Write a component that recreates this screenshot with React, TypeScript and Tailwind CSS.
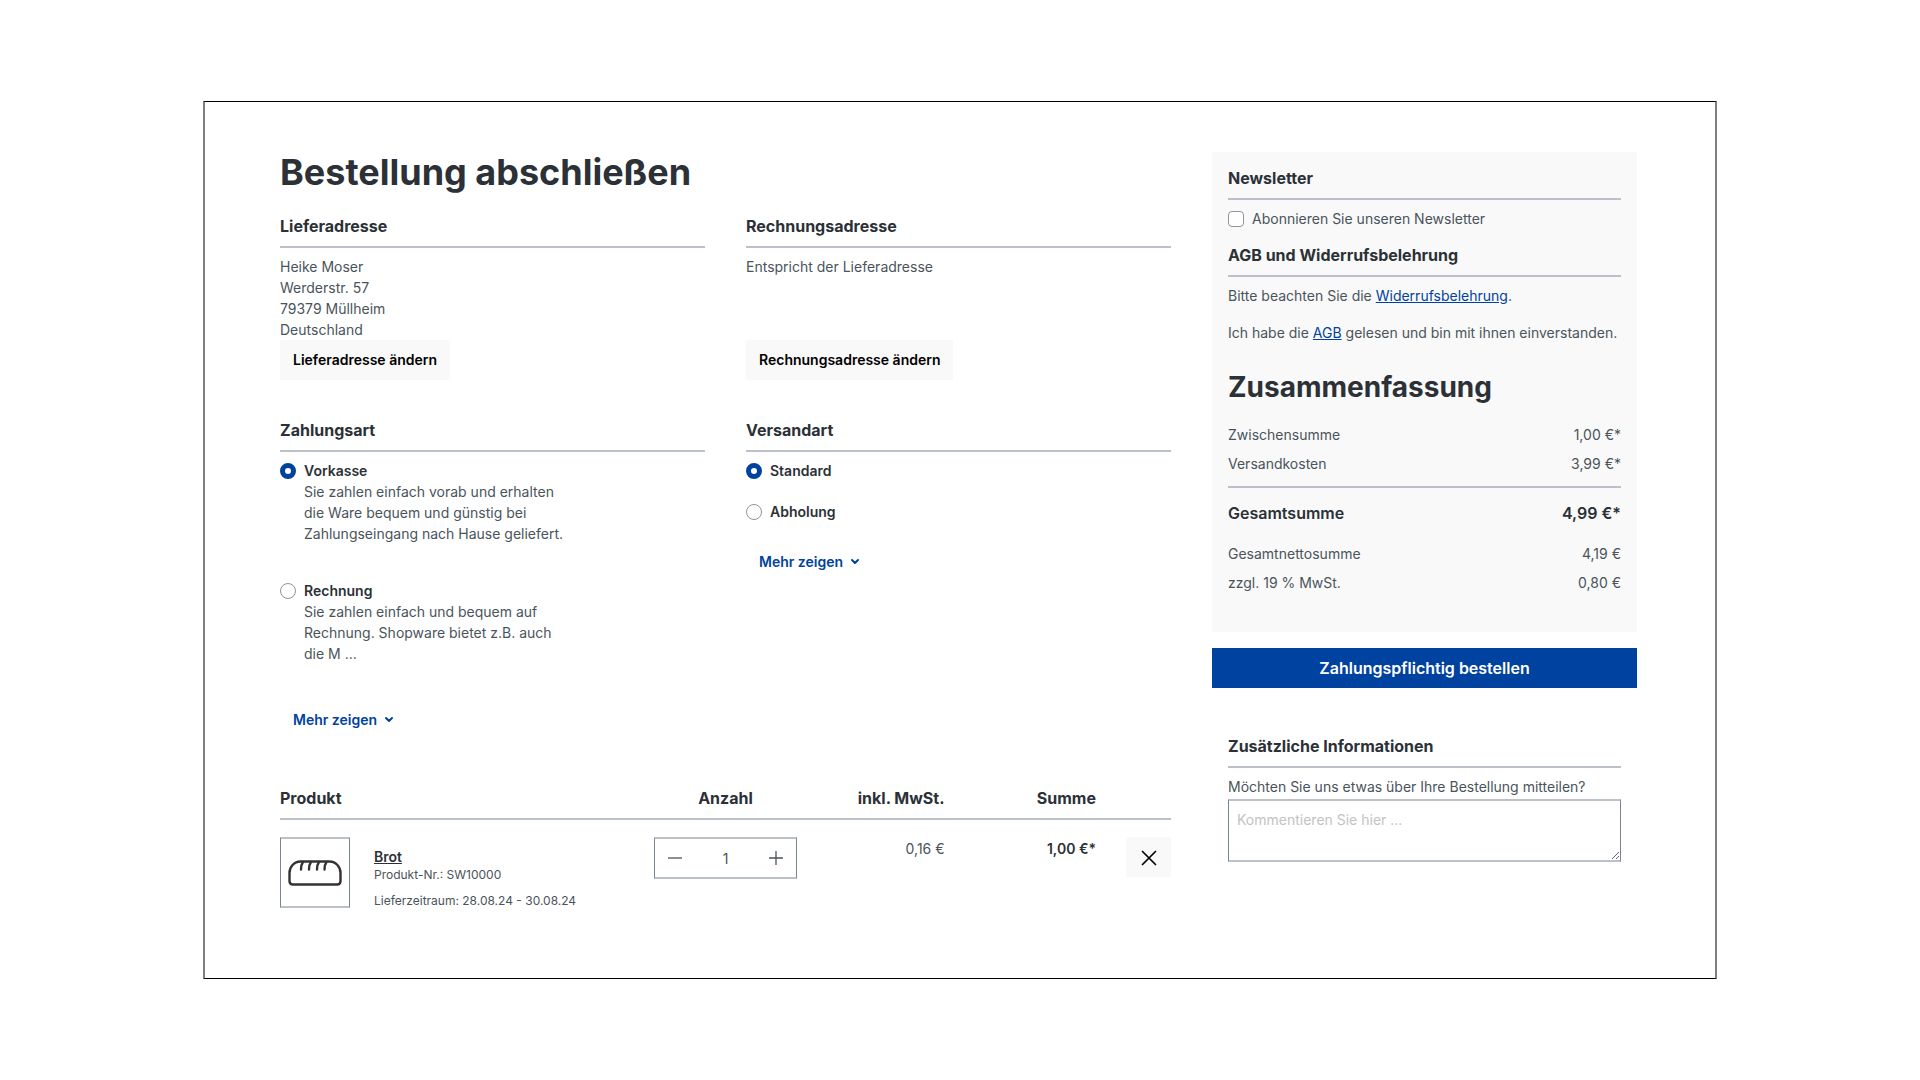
import { useState } from "react";
import type { ReactNode } from "react";

type Method = {
  id: string;
  name: string;
  description?: string;
};

const paymentMethods: Method[] = [
  {
    id: "vorkasse",
    name: "Vorkasse",
    description:
      "Sie zahlen einfach vorab und erhalten die Ware bequem und günstig bei Zahlungseingang nach Hause geliefert.",
  },
  {
    id: "rechnung",
    name: "Rechnung",
    description: "Sie zahlen einfach und bequem auf Rechnung. Shopware bietet z.B. auch die M ...",
  },
];

const shippingMethods: Method[] = [
  { id: "standard", name: "Standard" },
  { id: "abholung", name: "Abholung" },
];

function SectionTitle({ children }: { children: ReactNode }) {
  return (
    <h2 className="border-b-2 border-[#bcc1c7] pb-2 text-base leading-6 font-bold text-[#2b3136]">
      {children}
    </h2>
  );
}

function MoreButton() {
  return (
    <button type="button" className="flex h-10 items-center gap-2 px-[13px] pb-[2px] font-semibold text-[#0042a0]">
      Mehr zeigen
      <svg className="h-2 w-2" viewBox="0 0 8 8" fill="none" stroke="currentColor" strokeWidth="2" strokeLinecap="round" strokeLinejoin="round">
        <path d="M1 3 4 6 7 3" />
      </svg>
    </button>
  );
}

type MethodListProps = {
  group: string;
  methods: Method[];
  selected: string;
  onSelect: (id: string) => void;
};

function MethodList({ group, methods, selected, onSelect }: MethodListProps) {
  return (
    <>
      {methods.map((method) => (
        <label key={method.id} className="flex items-start gap-2">
          <input
            type="radio"
            name={group}
            checked={selected === method.id}
            onChange={() => onSelect(method.id)}
            className="mt-[3px] h-4 w-4 shrink-0 appearance-none rounded-full border border-[#8d959e] bg-white checked:border-[5px] checked:border-[#0042a0]"
          />
          <span>
            <strong className="block font-semibold text-[#2b3136]">{method.name}</strong>
            {method.description && <span className="block w-[264px]">{method.description}</span>}
          </span>
        </label>
      ))}
    </>
  );
}

function BreadIcon() {
  return (
    <svg className="h-[26px] w-[54px]" viewBox="0 0 54 26" fill="none" stroke="#333" strokeWidth="2.4" strokeLinecap="round" strokeLinejoin="round">
      <path d="M12.500 1.500h29c6.500 0 11 5.500 11 11.500v8c0 2-1.500 3.500-3.500 3.500H5c-2 0-3.500-1.500-3.500-3.500v-8C1.500 7 6 1.500 12.500 1.500Z" />
      <path d="M15 2c-1.500 2-2 4.500-2 7.500M23 2c-1.500 2-2 4.500-2 7.500M31 2c-1.500 2-2 4.500-2 7.500M38.500 2c-1.500 2-2 4.500-2 7.500" />
    </svg>
  );
}

function CartTable() {
  const [quantity, setQuantity] = useState(1);

  return (
    <table className="w-full table-fixed">
      <colgroup>
        <col className="w-[42%]" />
        <col className="w-[16%]" />
        <col />
        <col className="w-[17%]" />
        <col className="w-[75px]" />
      </colgroup>
      <thead>
        <tr className="border-b-2 border-[#bcc1c7] text-base leading-6 text-[#2b3136]">
          <th className="pb-2 text-left font-bold">Produkt</th>
          <th className="pb-2 text-center font-bold">Anzahl</th>
          <th className="pb-2 text-right font-bold">inkl. MwSt.</th>
          <th className="pb-2 text-right font-bold">Summe</th>
          <td />
        </tr>
      </thead>
      <tbody>
        <tr className="align-top">
          <td className="pt-[17px]">
            <div className="flex gap-6">
              <div className="flex h-[71px] w-[70px] items-center justify-center border-x border-y-2 border-x-[#798490] border-y-[#bcc1c7]">
                <BreadIcon />
              </div>
              <div className="pt-[11px] text-xs leading-[18px]">
                <a href="#brot" className="block text-sm leading-[18px] font-semibold text-[#2b3136] underline">
                  Brot
                </a>
                <p>Produkt-Nr.: SW10000</p>
                <p className="mt-2">Lieferzeitraum: 28.08.24 - 30.08.24</p>
              </div>
            </div>
          </td>
          <td className="pt-[17px]">
            <div className="flex h-[42px] border-x border-y-2 border-x-[#798490] border-y-[#bcc1c7]">
              <button
                type="button"
                aria-label="Anzahl verringern"
                className="flex w-10 items-center justify-center"
                onClick={() => setQuantity(Math.max(1, quantity - 1))}
              >
                <svg className="h-4 w-4" viewBox="0 0 16 16" stroke="#4a545b" strokeWidth="1.3">
                  <path d="M1 8h14" />
                </svg>
              </button>
              <input
                type="text"
                aria-label="Anzahl"
                value={quantity}
                onChange={(e) => setQuantity(Number(e.target.value) || 1)}
                className="w-0 flex-1 text-center"
              />
              <button
                type="button"
                aria-label="Anzahl erhöhen"
                className="flex w-10 items-center justify-center"
                onClick={() => setQuantity(quantity + 1)}
              >
                <svg className="h-4 w-4" viewBox="0 0 16 16" stroke="#4a545b" strokeWidth="1.3">
                  <path d="M1 8h14M8 1v14" />
                </svg>
              </button>
            </div>
          </td>
          <td className="pt-[18px] text-right">0,16 €</td>
          <td className="pt-[18px] text-right font-semibold text-[#2b3136]">1,00 €*</td>
          <td className="pt-[17px]">
            <button type="button" aria-label="Entfernen" className="ml-auto flex h-10 w-[45px] items-center justify-center bg-[#f9f9f9] pt-[2px]">
              <svg className="h-4 w-4" viewBox="0 0 16 16" stroke="#000" strokeWidth="1.7" strokeLinecap="round">
                <path d="m1.500 1.500 13 13m0-13-13 13" />
              </svg>
            </button>
          </td>
        </tr>
      </tbody>
    </table>
  );
}

function OrderSidebar() {
  return (
    <aside>
      <div className="bg-[#f9f9f9] px-4 pt-[14px] pb-[39px]">
        <SectionTitle>Newsletter</SectionTitle>
        <label className="mt-2 flex items-start gap-2">
          <input type="checkbox" className="mt-[3px] h-4 w-4 appearance-none rounded-sm border border-[#8d959e] bg-white checked:bg-[#0042a0]" />
          Abonnieren Sie unseren Newsletter
        </label>

        <div className="mt-[14px]">
          <SectionTitle>AGB und Widerrufsbelehrung</SectionTitle>
        </div>
        <p className="mt-2">
          Bitte beachten Sie die{" "}
          <a href="#widerruf" className="text-[#0042a0] underline">
            Widerrufsbelehrung
          </a>
          .
        </p>
        <p className="mt-4">
          Ich habe die{" "}
          <a href="#agb" className="text-[#0042a0] underline">
            AGB
          </a>{" "}
          gelesen und bin mit ihnen einverstanden.
        </p>

        <h2 className="mt-[26px] text-[28px] leading-9 font-bold text-[#2b3136]">Zusammenfassung</h2>
        <dl className="mt-[19px] grid grid-cols-[1fr_auto] gap-y-2">
          <dt>Zwischensumme</dt>
          <dd className="text-right">1,00 €*</dd>
          <dt>Versandkosten</dt>
          <dd className="text-right">3,99 €*</dd>
        </dl>
        <dl className="mt-3 flex justify-between border-t-2 border-[#bcc1c7] pt-[13px] text-base leading-6 font-semibold text-[#2b3136]">
          <dt>Gesamtsumme</dt>
          <dd>4,99 €*</dd>
        </dl>
        <dl className="mt-[18px] grid grid-cols-[1fr_auto] gap-y-2">
          <dt>Gesamtnettosumme</dt>
          <dd className="text-right">4,19 €</dd>
          <dt>zzgl. 19 % MwSt.</dt>
          <dd className="text-right">0,80 €</dd>
        </dl>
      </div>

      <button type="submit" className="mt-4 h-10 w-full bg-[#0042a0] text-base font-semibold text-white">
        Zahlungspflichtig bestellen
      </button>

      <div className="mt-[46px] px-4">
        <SectionTitle>Zusätzliche Informationen</SectionTitle>
        <label htmlFor="comment" className="mt-2 block">
          Möchten Sie uns etwas über Ihre Bestellung mitteilen?
        </label>
        <textarea
          id="comment"
          placeholder="Kommentieren Sie hier ..."
          className="mt-[2px] block h-[63px] w-full resize border-x border-y-2 border-x-[#798490] border-y-[#bcc1c7] px-2 py-2 placeholder:text-[#c3c3c3]"
        />
      </div>
    </aside>
  );
}

export default function App() {
  const [payment, setPayment] = useState("vorkasse");
  const [shipping, setShipping] = useState("standard");

  return (
    <div className="bg-white px-6 py-[101px] font-['Inter',sans-serif] text-sm leading-[21px] text-[#4a545b]">
      <form
        onSubmit={(e) => e.preventDefault()}
        className="mx-auto grid max-w-[1514px] grid-cols-3 gap-x-[41px] border-x-2 border-y border-x-[#808080] border-y-black pt-[50px] pr-[78px] pb-[68px] pl-[75px]"
      >
        <main className="col-span-2">
          <h1 className="text-4xl leading-10 font-bold text-[#2b3136]">Bestellung abschließen</h1>

          <div className="mt-[22px] grid grid-cols-2 gap-x-[41px]">
            <section className="flex flex-col">
              <SectionTitle>Lieferadresse</SectionTitle>
              <address className="mt-2 not-italic">
                Heike Moser
                <br />
                Werderstr. 57
                <br />
                79379 Müllheim
                <br />
                Deutschland
              </address>
              <button type="button" className="h-10 self-start bg-[#f9f9f9] px-[13px] pb-[2px] font-semibold text-black">
                Lieferadresse ändern
              </button>
            </section>
            <section className="flex flex-col">
              <SectionTitle>Rechnungsadresse</SectionTitle>
              <p className="mt-2 flex-1">Entspricht der Lieferadresse</p>
              <button type="button" className="h-10 self-start bg-[#f9f9f9] px-[13px] pb-[2px] font-semibold text-black">
                Rechnungsadresse ändern
              </button>
            </section>
          </div>

          <div className="mt-[38px] mb-[46px] grid grid-cols-2 gap-x-[41px]">
            <section>
              <SectionTitle>Zahlungsart</SectionTitle>
              <div className="mt-2 flex flex-col gap-9">
                <MethodList group="payment" methods={paymentMethods} selected={payment} onSelect={setPayment} />
                <MoreButton />
              </div>
            </section>
            <section>
              <SectionTitle>Versandart</SectionTitle>
              <div className="mt-2 flex flex-col gap-5">
                <MethodList group="shipping" methods={shippingMethods} selected={shipping} onSelect={setShipping} />
                <MoreButton />
              </div>
            </section>
          </div>

          <CartTable />
        </main>

        <OrderSidebar />
      </form>
    </div>
  );
}
